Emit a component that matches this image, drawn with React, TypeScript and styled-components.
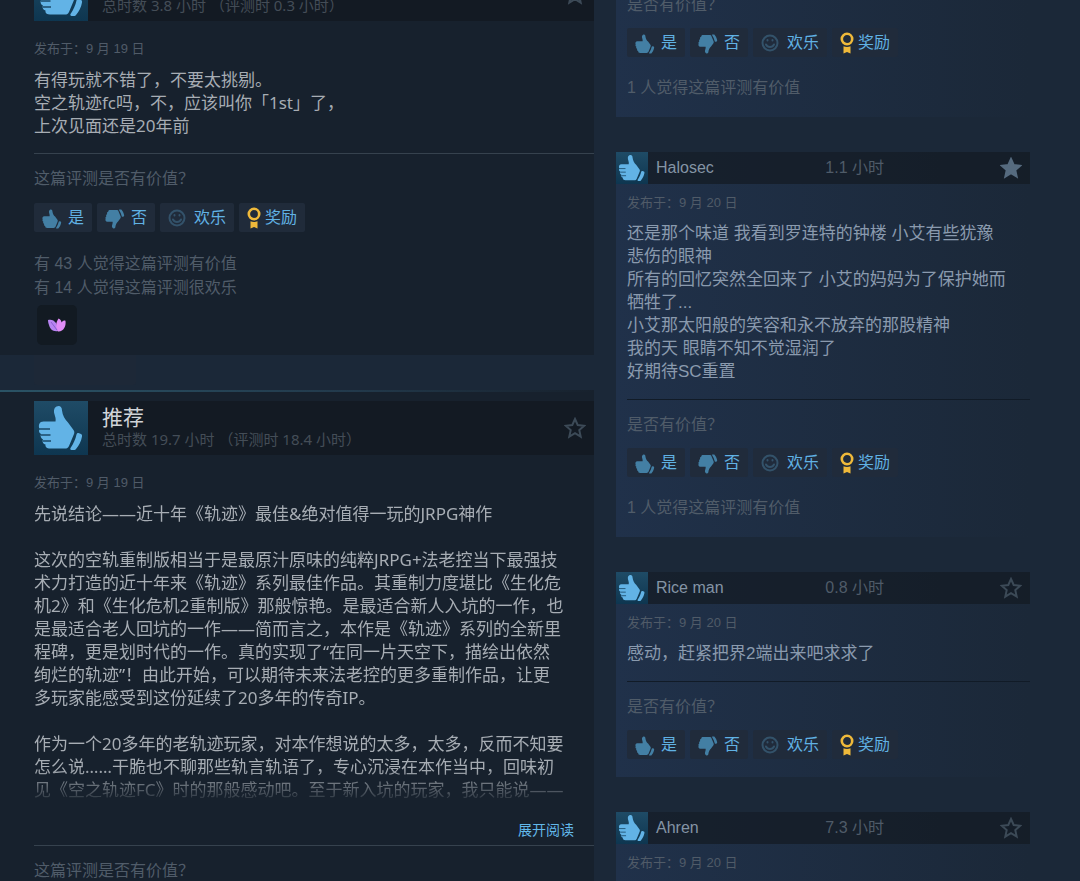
import React from "react";
import styled, { createGlobalStyle } from "styled-components";

const Global = createGlobalStyle`
  * { box-sizing: border-box; }
  body { margin: 0; background: #1b2838; }
`;

const latin = `"Liberation Sans", "Noto Sans CJK SC", sans-serif`;
const motiva = `"Noto Sans", "Noto Sans CJK SC", sans-serif`;

const Page = styled.div`
  display: grid;
  grid-template-columns: 594fr 486fr;
  height: 100vh;
  overflow: hidden;
  background: #1b2838;
  font-family: ${latin};
  font-size: 16px;
  line-height: 24px;
  color: #505c69;
`;

const MainColumn = styled.main`
  min-width: 0;
  margin-top: -44px;
`;

const SideColumn = styled.aside`
  min-width: 0;
  margin-top: -8px;
  padding: 0 50px 0 22px;
`;

const Review = styled.article`
  padding: 9px 0 10px 34px;
  border-top: 2px solid;
  border-image: linear-gradient(90deg, #2a5365, #22394b 60%, #17212d) 1;
  background: #17212d;
`;

const ReviewGap = styled.div`
  height: 35px;
  padding-left: 34px;
`;

const HiddenTip = styled.div`
  width: 102px;
  height: 30px;
  border-radius: 0 0 3px 3px;
  background: #1d2837;
`;

const ReviewHeader = styled.header`
  display: flex;
  align-items: center;
  height: 54px;
  padding-right: 8px;
  background: #131a23;
`;

const ThumbBox = styled.span<{ $size: number }>`
  flex: none;
  display: flex;
  width: ${(p) => p.$size}px;
  height: ${(p) => p.$size}px;
  background: linear-gradient(#1f4b66, #0e3650);
`;

const Verdict = styled.div`
  flex: 1;
  padding: 0 0 2px 14px;
  font-family: ${motiva};
`;

const Title = styled.h2`
  margin: 0;
  font-size: 21px;
  line-height: 24px;
  font-weight: 400;
  color: #d0d4d8;
`;

const Hours = styled.p`
  margin: 0;
  font-size: 15px;
  line-height: 20px;
  color: #444d57;
`;

const Posted = styled.p<{ $side?: boolean }>`
  margin: 0;
  padding: ${(p) => (p.$side ? "11px 0" : "20px 0 11px")};
  font-size: 13px;
  line-height: 16px;
  color: #505b68;
`;

const Body = styled.p<{ $side?: boolean; $clipped?: boolean }>`
  margin: 0;
  font-family: ${(p) => (p.$side ? latin : motiva)};
  font-size: 17px;
  line-height: 23px;
  white-space: pre-line;
  color: ${(p) => (p.$side ? "#8a9aae" : "#a7adb4")};
  ${(p) => p.$clipped && "mask-image: linear-gradient(#000 calc(100% - 32px), transparent calc(100% + 4px));"}
`;

const More = styled.div`
  display: flex;
  justify-content: flex-end;
  padding: 19px 20px 5px 0;
`;

const MoreLink = styled.a`
  font-size: 14px;
  line-height: 20px;
  color: #62b8ea;
  text-decoration: none;
`;

const Question = styled.div<{ $side?: boolean; $gap: number }>`
  margin-top: ${(p) => p.$gap}px;
  padding: 13px 0 ${(p) => (p.$side ? 11 : 12)}px;
  border-top: 1px solid ${(p) => (p.$side ? "#111b27" : "#36424e")};
`;

const Votes = styled.div`
  display: flex;
  gap: 5px;
`;

const VoteButton = styled.button<{ $side?: boolean }>`
  display: flex;
  align-items: center;
  height: 29px;
  padding: 0 8px;
  border: 0;
  border-radius: 2px;
  background: ${(p) => (p.$side ? "#202b3b" : "#202b3a")};
  color: #60b2e4;
  font: 16px/24px ${latin};
  white-space: nowrap;
`;

const IconSlot = styled.span<{ $w: number; $low?: boolean }>`
  flex: none;
  display: flex;
  width: ${(p) => p.$w}px;
  padding-top: ${(p) => (p.$low ? 3 : 0)}px;
`;

const Found = styled.p<{ $side?: boolean }>`
  margin: 0;
  padding: ${(p) => (p.$side ? "20px 0 0" : "20px 0 5px")};
  line-height: ${(p) => (p.$side ? 22 : 24)}px;
  white-space: pre-line;
`;

const Award = styled.div`
  display: grid;
  place-items: center;
  width: 40px;
  height: 40px;
  margin-left: 3px;
  border-radius: 5px;
  background: #121a22;
`;

const Card = styled.article`
  margin-bottom: 35px;
  background: linear-gradient(90deg, #20314a, #1b2838);
`;

const CardHeader = styled.header`
  display: grid;
  grid-template-columns: 32px 9fr auto 7fr;
  align-items: center;
  height: 32px;
  padding-right: 8px;
  background: rgba(20, 26, 34, 0.72);
`;

const Name = styled.a`
  padding-left: 8px;
  color: #8494a5;
  text-decoration: none;
`;

const CardHours = styled.span`
  color: #4f5b68;
`;

const StarSlot = styled.span`
  display: flex;
  justify-self: end;
`;

const CardBody = styled.div`
  padding: 0 0 18px 11px;
`;

const HAND =
  "M22.500 5.500c3-1.500 5.500 0 5.500 4 .5 5 3 9 6 12l5.500 7.500c1 1.500 1 2.500.5 4l-5 12c-1 2-2 2.500-4 2.500H16c-3 0-5-1.500-4.500-4-2.500-.5-3.500-3-2.500-5-2-1-3-3-2-5.500-2-1-2.500-3-1.500-5-1.500-4 0-7.500 4-7.500h12c1-4-2-8-1.500-11 .2-2 1-3.300 2.500-4z";
const CUFF = "M44.500 32l2.500 1c1 .5 1.200 1.500 1 2.500-.8 5-3 9-6 12.500-.6.7-1 1-2 1h-2.500c-1 0-1.500-1-1-2 3-4.500 5-9 6-13.500.3-1.200 1-1.800 2-1.500z";

function Thumb({ size }: { size: number }) {
  return (
    <svg width={size} height={size} viewBox="0 0 54 54" fill="#62b3e6">
      <path d={HAND} />
      <path d={CUFF} />
      <path d="M5 28h11M7 34h9.500M9 40h8" stroke="#1b4a68" strokeWidth="1.400" fill="none" />
    </svg>
  );
}

function SmallThumb({ down }: { down?: boolean }) {
  return (
    <svg width="20" height="20" viewBox="4 4 46 46" fill="#437fa4">
      <g transform={down ? "translate(0 54) scale(1 -1)" : undefined}>
        <path d={HAND} />
        <path d={CUFF} />
      </g>
    </svg>
  );
}

function Star({ filled }: { filled?: boolean }) {
  return (
    <svg width="22" height="22" viewBox="0 0 22 22">
      <path
        d="M11 2l2.700 6 6.500.7-4.900 4.400 1.400 6.500-5.700-3.400-5.700 3.400 1.400-6.500-4.900-4.400 6.500-.7z"
        fill={filled ? "#566b7f" : "none"}
        stroke={filled ? "#566b7f" : "#3c4a57"}
        strokeWidth="2"
        strokeLinejoin="miter"
      />
    </svg>
  );
}

function Smile() {
  return (
    <svg width="18" height="18" viewBox="0 0 18 18" fill="none" stroke="#33526a" strokeWidth="2" strokeLinecap="round">
      <circle cx="9" cy="9" r="7.500" />
      <path d="M5 10.500c1.500 3.300 6.500 3.300 8 0M6.500 6v.5M11.500 6v.5" />
    </svg>
  );
}

function Ribbon() {
  return (
    <svg width="14" height="22" viewBox="0 0 14 22">
      <circle cx="7" cy="7" r="5.200" fill="none" stroke="#efb93a" strokeWidth="2.600" />
      <path d="M3.500 14.200c2 1 5 1 7 0V21.500L7 20l-3.500 1.500z" fill="#efb93a" />
    </svg>
  );
}

function Butterfly() {
  return (
    <svg width="20" height="16" viewBox="0 0 20 16">
      <path d="M1 3c3-1 6 0 8 3l2 8c-5 1-8-2-9-6-.6-2-1-3-1-5z" fill="#b784f2" />
      <path d="M11 14.500C8 10 9 5 11.500 1.500c2 1 3 2.500 3 4C16 3.500 18 3 18.500 4c.8 5-2 11-7.500 10.500z" fill="#e08cf7" />
      <path d="M4 5l6 8" stroke="#8b5fd0" strokeWidth="1" />
    </svg>
  );
}

function VoteRow({ side }: { side?: boolean }) {
  return (
    <Votes>
      <VoteButton $side={side}><IconSlot $w={26} $low><SmallThumb /></IconSlot>是</VoteButton>
      <VoteButton $side={side}><IconSlot $w={26} $low><SmallThumb down /></IconSlot>否</VoteButton>
      <VoteButton $side={side}><IconSlot $w={26}><Smile /></IconSlot>欢乐</VoteButton>
      <VoteButton $side={side}><IconSlot $w={18}><Ribbon /></IconSlot>奖励</VoteButton>
    </Votes>
  );
}

function MainHeader({ hours }: { hours: string }) {
  return (
    <ReviewHeader>
      <ThumbBox $size={54}><Thumb size={54} /></ThumbBox>
      <Verdict>
        <Title>推荐</Title>
        <Hours>{hours}</Hours>
      </Verdict>
      <Star />
    </ReviewHeader>
  );
}

type CardData = { name: string; hours: string; text: string; starred?: boolean; found?: string };

const cards: CardData[] = [
  {
    name: "Halosec",
    hours: "1.1 小时",
    starred: true,
    found: "1 人觉得这篇评测有价值",
    text: `还是那个味道 我看到罗连特的钟楼 小艾有些犹豫
悲伤的眼神
所有的回忆突然全回来了 小艾的妈妈为了保护她而
牺牲了...
小艾那太阳般的笑容和永不放弃的那股精神
我的天 眼睛不知不觉湿润了
好期待SC重置`,
  },
  { name: "Rice man", hours: "0.8 小时", text: "感动，赶紧把界2端出来吧求求了" },
  { name: "Ahren", hours: "7.3 小时", text: "" },
];

const firstText = `有得玩就不错了，不要太挑剔。
空之轨迹fc吗，不，应该叫你「1st」了，
上次见面还是20年前`;

const longText = `先说结论——近十年《轨迹》最佳&绝对值得一玩的JRPG神作

这次的空轨重制版相当于是最原汁原味的纯粹JRPG+法老控当下最强技
术力打造的近十年来《轨迹》系列最佳作品。其重制力度堪比《生化危
机2》和《生化危机2重制版》那般惊艳。是最适合新人入坑的一作，也
是最适合老人回坑的一作——简而言之，本作是《轨迹》系列的全新里
程碑，更是划时代的一作。真的实现了“在同一片天空下，描绘出依然
绚烂的轨迹”！由此开始，可以期待未来法老控的更多重制作品，让更
多玩家能感受到这份延续了20多年的传奇IP。

作为一个20多年的老轨迹玩家，对本作想说的太多，太多，反而不知要
怎么说……干脆也不聊那些轨言轨语了，专心沉浸在本作当中，回味初
见《空之轨迹FC》时的那般感动吧。至于新入坑的玩家，我只能说——`;

function SideVote({ found, gap }: { found?: string; gap: number }) {
  return (
    <>
      <Question $side $gap={gap}>是否有价值？</Question>
      <VoteRow side />
      {found && <Found $side>{found}</Found>}
    </>
  );
}

export default function App() {
  return (
    <>
      <Global />
      <Page lang="zh-CN">
        <MainColumn>
          <Review>
            <MainHeader hours="总时数 3.8 小时 （评测时 0.3 小时）" />
            <Posted>发布于：9 月 19 日</Posted>
            <Body>{firstText}</Body>
            <Question $gap={16}>这篇评测是否有价值？</Question>
            <VoteRow />
            <Found>{"有 43 人觉得这篇评测有价值\n有 14 人觉得这篇评测很欢乐"}</Found>
            <Award><Butterfly /></Award>
          </Review>
          <ReviewGap><HiddenTip /></ReviewGap>
          <Review>
            <MainHeader hours="总时数 19.7 小时 （评测时 18.4 小时）" />
            <Posted>发布于：9 月 19 日</Posted>
            <Body $clipped>{longText}</Body>
            <More><MoreLink href="#more">展开阅读</MoreLink></More>
            <Question $gap={0}>这篇评测是否有价值？</Question>
          </Review>
        </MainColumn>
        <SideColumn>
          <Card>
            <CardBody>
              <SideVote found="1 人觉得这篇评测有价值" gap={-13} />
            </CardBody>
          </Card>
          {cards.map((c) => (
            <Card key={c.name}>
              <CardHeader>
                <ThumbBox $size={32}><Thumb size={32} /></ThumbBox>
                <Name href="#user">{c.name}</Name>
                <CardHours>{c.hours}</CardHours>
                <StarSlot><Star filled={c.starred} /></StarSlot>
              </CardHeader>
              <CardBody>
                <Posted $side>发布于：9 月 20 日</Posted>
                <Body $side>{c.text}</Body>
                <SideVote found={c.found} gap={16} />
              </CardBody>
            </Card>
          ))}
        </SideColumn>
      </Page>
    </>
  );
}
